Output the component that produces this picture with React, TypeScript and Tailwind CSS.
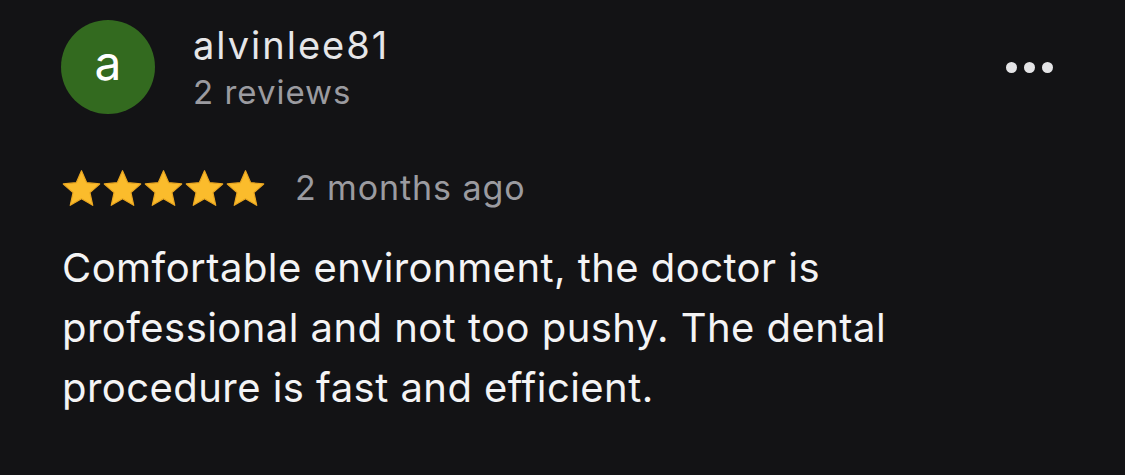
import React from "react";

const Star = () => (
  <svg width="41" height="41" viewBox="0 0 24 24">
    <path
      d="M12 1.6L15.06 8.59L22.65 9.34L16.95 14.41L18.58 21.86L12 18L5.42 21.86L7.05 14.41L1.35 9.34L8.94 8.59Z"
      fill="#fbbc2c"
      stroke="#eaa620"
      strokeWidth="0.7"
      strokeLinejoin="round"
    />
  </svg>
);

export default function App() {
  return (
    <div
      className="w-[1125px] h-[475px] bg-[#131315] text-white overflow-hidden"
      style={{ fontFamily: "Inter, 'Noto Sans', sans-serif" }}
    >
      <div className="flex items-start pt-[20px] pl-[61px] pr-[72px]">
        <div className="w-[94px] h-[94px] rounded-full bg-[#336a1f] flex items-center justify-center text-[48px] leading-none pb-[9px]">
          a
        </div>
        <div className="ml-[38px] flex-1 pt-[3px]">
          <div className="text-[38px] leading-[44px] tracking-[2px] text-[#e6e6e8]">alvinlee81</div>
          <div className="text-[33px] leading-[40px] tracking-[1px] text-[#9b9ba0] mt-[5px]">2 reviews</div>
        </div>
        <div className="flex gap-[7px] mt-[42px]">
          <span className="w-[11px] h-[11px] rounded-full bg-[#e4e4e6]" />
          <span className="w-[11px] h-[11px] rounded-full bg-[#e4e4e6]" />
          <span className="w-[11px] h-[11px] rounded-full bg-[#e4e4e6]" />
        </div>
      </div>
      <div className="flex items-center pl-[61px] mt-[54px] h-[40px]">
        <div className="flex">
          <Star />
          <Star />
          <Star />
          <Star />
          <Star />
        </div>
        <span className="ml-[29px] text-[34px] leading-[40px] tracking-[0.9px] text-[#9b9ba0]">2 months ago</span>
      </div>
      <p className="pl-[62px] mt-[30px] w-[1000px] text-[40px] leading-[60px] tracking-[0.45px] text-[#f4f4f5]">
        Comfortable environment, the doctor is
        <br />
        professional and not too pushy. The dental
        <br />
        procedure is fast and efficient.
      </p>
    </div>
  );
}
